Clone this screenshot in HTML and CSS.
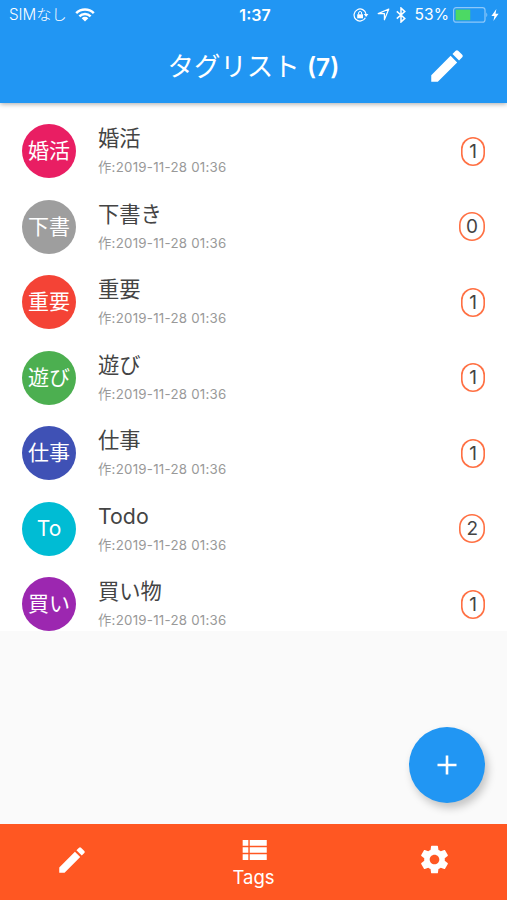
FILE: index.html
```html
<!DOCTYPE html>
<html lang="ja">
<head>
  <meta charset="utf-8">
  <title>タグリスト</title>
  <link rel="stylesheet" href="styles.css">
</head>
<body>
  <header>
    <div class="status-bar">
      <div class="status-left">
        <span class="carrier">SIMなし</span>
        <svg class="wifi" viewBox="0 0 20 14" width="20" height="14">
          <path d="M1.2 5.2a12.5 12.5 0 0 1 17.6 0M4.4 8.3a8 8 0 0 1 11.2 0" fill="none" stroke="#fff" stroke-width="2.5"/>
          <path d="M10 13.6L6.7 10.2a4.7 4.7 0 0 1 6.6 0z" fill="#fff"/>
        </svg>
      </div>
      <div class="time">1:37</div>
      <div class="status-right">
        <svg class="lock" viewBox="0 0 16 14" width="16" height="14">
          <path d="M12.4 9.8A6 6 0 1 1 13 6" fill="none" stroke="#fff" stroke-width="1.2"/>
          <path d="M10.8 6h4.6l-2.3 3z" fill="#fff"/>
          <path d="M4.2 6.3h5.8v4H4.2z" fill="#fff"/>
          <path d="M5.6 6.5V5a1.5 1.5 0 0 1 3 0v1.5" fill="none" stroke="#fff"/>
        </svg>
        <svg class="location" viewBox="0 0 13 13" width="13" height="13">
          <path d="M11.8 1L7.4 11.8V5.6H1.2z" fill="none" stroke="#fff" stroke-width="1.2" stroke-linejoin="round"/>
        </svg>
        <svg class="bluetooth" viewBox="0 0 10 16" width="10" height="16">
          <path d="M.8 4.4l8 7L5 15V1l3.8 3.6-8 7" fill="none" stroke="#fff" stroke-width="1.5"/>
        </svg>
        <span class="percent">53%</span>
        <svg class="battery" viewBox="0 0 36 16" width="36" height="16">
          <rect x=".6" y=".6" width="31.4" height="14.6" rx="2.5" fill="none" stroke="#8dc8fa" stroke-width="1.2"/>
          <rect x="2.6" y="2.6" width="14.6" height="10.6" fill="#4cd964"/>
          <path d="M33.3 5.5q2 2.4 0 4.8z" fill="#8dc8fa"/>
        </svg>
        <svg class="bolt" viewBox="0 0 8 12" width="8" height="12">
          <path d="M5.4 0L.4 7h3L2.4 12 7.6 4.8H4.5z" fill="#fff"/>
        </svg>
      </div>
    </div>
    <div class="app-bar">
      <h1>タグリスト <b>(7)</b></h1>
      <svg class="edit" viewBox="0 0 24 24" width="42" height="42">
        <path d="M3 17.25V21h3.75L17.81 9.94l-3.75-3.75L3 17.25zM20.71 7.04a1 1 0 0 0 0-1.41l-2.34-2.34a1 1 0 0 0-1.41 0l-1.83 1.83 3.75 3.75 1.83-1.83z"/>
      </svg>
    </div>
  </header>

  <main>
    <ul class="tag-list">
      <li>
        <div class="avatar pink">婚活</div>
        <div class="tag"><h2>婚活</h2><p>作:2019-11-28 01:36</p></div>
        <span class="count">1</span>
      </li>
      <li>
        <div class="avatar grey">下書</div>
        <div class="tag"><h2>下書き</h2><p>作:2019-11-28 01:36</p></div>
        <span class="count">0</span>
      </li>
      <li>
        <div class="avatar red">重要</div>
        <div class="tag"><h2>重要</h2><p>作:2019-11-28 01:36</p></div>
        <span class="count">1</span>
      </li>
      <li>
        <div class="avatar green">遊び</div>
        <div class="tag"><h2>遊び</h2><p>作:2019-11-28 01:36</p></div>
        <span class="count">1</span>
      </li>
      <li>
        <div class="avatar indigo">仕事</div>
        <div class="tag"><h2>仕事</h2><p>作:2019-11-28 01:36</p></div>
        <span class="count">1</span>
      </li>
      <li>
        <div class="avatar cyan">To</div>
        <div class="tag"><h2>Todo</h2><p>作:2019-11-28 01:36</p></div>
        <span class="count">2</span>
      </li>
      <li>
        <div class="avatar purple">買い</div>
        <div class="tag"><h2>買い物</h2><p>作:2019-11-28 01:36</p></div>
        <span class="count">1</span>
      </li>
    </ul>
    <button class="add" aria-label="追加">
      <svg viewBox="0 0 20 20" width="20" height="20">
        <path d="M10 .5v19M.5 10h19" stroke="#fff" stroke-width="2.6"/>
      </svg>
    </button>
  </main>

  <nav>
    <a class="nav-item">
      <svg viewBox="0 0 24 24" width="34" height="34">
        <path d="M3 17.25V21h3.75L17.81 9.94l-3.75-3.75L3 17.25zM20.71 7.04a1 1 0 0 0 0-1.41l-2.34-2.34a1 1 0 0 0-1.41 0l-1.83 1.83 3.75 3.75 1.83-1.83z"/>
      </svg>
    </a>
    <a class="nav-item active">
      <svg viewBox="0 0 24 24" width="34" height="34">
        <path d="M4 14h4v-4H4v4zm0 5h4v-4H4v4zM4 9h4V5H4v4zm5 5h12v-4H9v4zm0 5h12v-4H9v4zM9 5v4h12V5H9z"/>
      </svg>
      <span>Tags</span>
    </a>
    <a class="nav-item">
      <svg viewBox="0 0 24 24" width="33" height="33">
        <path d="M19.43 12.98c.04-.32.07-.64.07-.98s-.03-.66-.07-.98l2.11-1.65c.19-.15.24-.42.12-.64l-2-3.46c-.12-.22-.39-.3-.61-.22l-2.49 1c-.52-.4-1.08-.73-1.69-.98l-.38-2.65C14.46 2.18 14.25 2 14 2h-4c-.25 0-.46.18-.49.42l-.38 2.65c-.61.25-1.17.59-1.69.98l-2.49-1c-.23-.09-.49 0-.61.22l-2 3.46c-.13.22-.07.49.12.64l2.11 1.65c-.04.32-.07.65-.07.98s.03.66.07.98l-2.11 1.65c-.19.15-.24.42-.12.64l2 3.46c.12.22.39.3.61.22l2.49-1c.52.4 1.08.73 1.69.98l.38 2.65c.03.24.24.42.49.42h4c.25 0 .46-.18.49-.42l.38-2.65c.61-.25 1.17-.59 1.69-.98l2.49 1c.23.09.49 0 .61-.22l2-3.46c.12-.22.07-.49-.12-.64l-2.11-1.65zM12 15.5c-1.93 0-3.5-1.57-3.5-3.5s1.57-3.5 3.5-3.5 3.5 1.57 3.5 3.5-1.57 3.5-3.5 3.5z"/>
      </svg>
    </a>
  </nav>
</body>
</html>
```

FILE: styles.css
```css
* {
  box-sizing: border-box;
}

body {
  font-family: Inter, "Noto Sans CJK JP", sans-serif;
  margin: 0;
  height: 900px;
  display: flex;
  flex-direction: column;
  background-color: #fafafa;
  color: #444;
  overflow: hidden;
}

svg {
  display: block;
  flex-shrink: 0;
}

header {
  height: 103px;
  background-color: #2196f3;
  color: #fff;
  box-shadow: 0 1px 5px rgba(0, 0, 0, 0.35);
  z-index: 1;
}

.status-bar {
  display: grid;
  grid-template-columns: 1fr auto 1fr;
  align-items: center;
  height: 29px;
  padding: 0 8px 0 9px;
}

.status-left, .status-right {
  display: flex;
  align-items: center;
}

.status-right {
  justify-content: flex-end;
}

.carrier {
  font-size: 15.2px;
  font-weight: 300;
  line-height: 20px;
}

.wifi {
  margin-left: 8px;
}

.time {
  margin-left: 2px;
  font-size: 16px;
  font-weight: 600;
  line-height: 18px;
}

.location {
  margin-left: 8px;
}

.bluetooth {
  margin-left: 6px;
}

.percent {
  margin: 0 4px 0 9px;
  font-size: 15.6px;
  line-height: 20px;
}

.battery {
  margin-right: -1px;
}

.bolt {
  margin-left: 3px;
}

.app-bar {
  display: grid;
  grid-template-columns: 1fr auto 1fr;
  align-items: center;
  height: 74px;
}

.app-bar h1 {
  grid-column: 2;
  margin: 0;
  font-size: 26.4px;
  font-weight: 400;
  line-height: 36px;
}

.app-bar b {
  font-size: 24.5px;
  font-weight: 600;
}

.edit {
  justify-self: end;
  margin-right: 39px;
}

.edit, .nav-item svg {
  fill: #fff;
}

main {
  flex: 1;
  position: relative;
}

.tag-list {
  display: flex;
  flex-direction: column;
  gap: 21.5px;
  margin: 0;
  padding: 21.2px 22px 0;
  list-style: none;
  background-color: #fff;
}

.tag-list li {
  display: flex;
  align-items: center;
  height: 54px;
}

.avatar {
  width: 54px;
  height: 54px;
  border-radius: 50%;
  color: #fff;
  font-size: 21px;
  line-height: 54px;
  text-align: center;
}

.pink { background-color: #e91e63; }
.grey { background-color: #9e9e9e; }
.red { background-color: #f44336; }
.green { background-color: #4caf50; }
.indigo { background-color: #3f51b5; }
.cyan { background-color: #00bcd4; }
.purple { background-color: #9c27b0; }

.tag {
  flex: 1;
  margin-left: 22px;
}

.tag h2 {
  margin: 0;
  font-size: 21.3px;
  font-weight: 400;
  line-height: 29px;
}

.tag p {
  margin: 3px 0 0;
  color: #999;
  font-size: 13.3px;
  letter-spacing: 0.25px;
  line-height: 22px;
}

.count {
  min-width: 24px;
  height: 29px;
  padding: 0 7px;
  border-radius: 14px;
  box-shadow: inset 0 0 0 1.6px #ff7043;
  font-size: 19px;
  line-height: 30px;
  text-align: center;
}

.add {
  position: absolute;
  right: 22px;
  bottom: 21.5px;
  display: flex;
  align-items: center;
  justify-content: center;
  width: 76px;
  height: 76px;
  padding: 0;
  border: none;
  border-radius: 50%;
  background-color: #2196f3;
  box-shadow: 3px 5px 9px rgba(0, 0, 0, 0.22);
}

nav {
  display: flex;
  height: 76px;
  background-color: #ff5722;
  color: #fff;
}

.nav-item {
  flex: 1;
  display: flex;
  flex-direction: column;
  align-items: center;
  padding-top: 19px;
}

.nav-item.active {
  flex: 1.5;
  padding-top: 9px;
}

.nav-item span {
  font-size: 18.5px;
  line-height: 20px;
}
```
